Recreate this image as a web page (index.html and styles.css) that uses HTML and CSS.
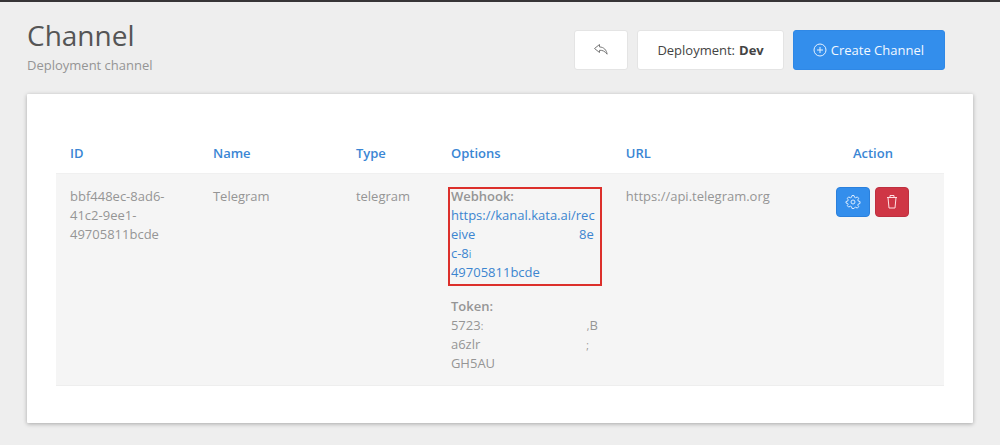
FILE: index.html
```html
<!DOCTYPE html>
<html lang="en">
<head>
<meta charset="utf-8">
<title>Channel</title>
<link rel="stylesheet" href="styles.css">
</head>
<body>
<main class="page">
  <header class="page-header">
    <div class="heading">
      <h1 class="title">Channel</h1>
      <p class="subtitle">Deployment channel</p>
    </div>
    <div class="toolbar">
      <button class="btn btn-back" type="button" aria-label="Back">
        <svg width="16" height="14" viewBox="0 0 16 14" fill="none" stroke="#777" stroke-width="1" stroke-linejoin="round"><path d="M6.500 1.500 1.500 5.500l5 4V7.300c3.200-.2 5.400 1 7.600 3.900C13.500 7 11 4.200 6.500 3.900z"/></svg>
      </button>
      <button class="btn" type="button">Deployment: <strong>Dev</strong></button>
      <button class="btn btn-primary" type="button">
        <svg width="14" height="14" viewBox="0 0 14 14" fill="none" stroke="#e6f2ff" stroke-width="1"><circle cx="7" cy="7" r="6"/><path d="M7 4v6M4 7h6"/></svg>
        Create Channel
      </button>
    </div>
  </header>
  <section class="card">
    <table class="channels">
      <thead>
        <tr>
          <th class="col-id">ID</th>
          <th class="col-name">Name</th>
          <th class="col-type">Type</th>
          <th class="col-options">Options</th>
          <th class="col-url">URL</th>
          <th class="col-action">Action</th>
        </tr>
      </thead>
      <tbody>
        <tr>
          <td>bbf448ec-8ad6-41c2-9ee1-49705811bcde</td>
          <td>Telegram</td>
          <td>telegram</td>
          <td>
            <div class="webhook">
              <strong class="label">Webhook:</strong>
              <a class="link" href="#">
                <span class="line">https://kanal.kata.ai/rec</span>
                <span class="line split"><span>eive</span><span>8e</span></span>
                <span class="line">c-8<span class="cut">i</span></span>
                <span class="line">49705811bcde</span>
              </a>
            </div>
            <div class="token">
              <strong class="label">Token:</strong>
              <span class="line split"><span>5723<span class="cut">:</span></span><span><span class="cut">,</span>B</span></span>
              <span class="line split split-short"><span>a6zlr</span><span class="cut">;</span></span>
              <span class="line">GH5AU</span>
            </div>
          </td>
          <td>https://api.telegram.org</td>
          <td>
            <div class="actions">
              <button class="icon-btn" type="button" aria-label="Settings">
                <svg width="16" height="16" viewBox="0 0 16 16" fill="none" stroke="#d9ebff" stroke-width="1" stroke-linejoin="round"><path d="M7 1.500h2l.5 1.800 1.200.5 1.600-.9 1.400 1.400-.9 1.600.5 1.200 1.700.4v2l-1.700.5-.5 1.200.9 1.500-1.400 1.400-1.600-.9-1.200.5L9 14.500H7l-.5-1.800-1.200-.5-1.600.9-1.400-1.400.9-1.500L2.700 9.500 1 9V7.500l1.700-.4.5-1.200-.9-1.600 1.400-1.400 1.600.9 1.200-.5z"/><circle cx="8" cy="8" r="2"/></svg>
              </button>
              <button class="icon-btn icon-btn-danger" type="button" aria-label="Delete">
                <svg width="14" height="16" viewBox="0 0 14 16" fill="none" stroke="#ffdfe2" stroke-width="1" stroke-linejoin="round"><path d="M2 3.500h10M5 3.500v-2h4v2M3 3.500l1 10.500h6l1-10.500"/></svg>
              </button>
            </div>
          </td>
        </tr>
      </tbody>
    </table>
  </section>
</main>
</body>
</html>
```
FILE: styles.css
```css
* {
  box-sizing: border-box;
}

body {
  margin: 0;
  background: #eee;
  border-top: 2px solid #363436;
  color: #959595;
  font: 13px/19px "Open Sans", "Noto Sans", sans-serif;
}

.page {
  padding: 14px 27px 21px;
}

.page-header {
  display: flex;
  justify-content: space-between;
  align-items: flex-start;
  padding-right: 28px;
}

.title {
  margin: 0;
  color: #555;
  font-size: 28px;
  font-weight: 400;
  line-height: 38px;
}

.subtitle {
  margin: 0;
  line-height: 22px;
}

.toolbar {
  display: flex;
  gap: 9px;
  padding-top: 14px;
}

.btn {
  display: flex;
  align-items: center;
  justify-content: center;
  gap: 4px;
  height: 40px;
  padding: 0 19px;
  border: 1px solid #e4e4e4;
  border-radius: 3px;
  background: #fff;
  color: #444;
  font: inherit;
}

.btn-primary {
  padding: 0 20px 0 19px;
  border-color: #2f88e6;
  background: #338eec;
  color: #f2f8ff;
}

.btn-back {
  padding: 0 18px;
}

.card {
  margin-top: 18px;
  padding: 40px 29px 37px;
  border-radius: 1px;
  background: #fff;
  box-shadow: 0 1px 4px rgba(0, 0, 0, 0.3);
}

.channels {
  width: 100%;
  border-collapse: collapse;
  table-layout: fixed;
}

.channels th {
  padding: 10px 14px;
  color: #3a86d4;
  font-weight: 600;
  text-align: left;
}

.channels td {
  padding: 13px 14px 12px;
  border-top: 1px solid #f0f0f0;
  border-bottom: 1px solid #eee;
  background: #f5f5f5;
  vertical-align: top;
}

.col-id,
.col-name {
  width: 16.1%;
}

.col-type {
  width: 10.7%;
}

.col-options {
  width: 19.7%;
}

.col-url {
  width: 21.4%;
}

.channels .col-action {
  text-align: center;
}

.label,
.line {
  display: block;
}

.label {
  font-weight: 600;
}

.link {
  color: #3c85d0;
  text-decoration: none;
}

.split {
  display: flex;
  justify-content: space-between;
  align-items: baseline;
}

.split-short {
  padding-right: 9px;
}

.link .split {
  padding-right: 4px;
}

.cut {
  font-size: 10px;
  line-height: 10px;
}

.webhook {
  position: relative;
}

.webhook::after {
  content: "";
  position: absolute;
  inset: 0 -4px -4px -3px;
  border: 2px solid #dc2f2b;
  pointer-events: none;
}

.token {
  margin-top: 15px;
}

.actions {
  display: flex;
  justify-content: center;
  gap: 5px;
}

.icon-btn {
  display: flex;
  align-items: center;
  justify-content: center;
  width: 34px;
  height: 30px;
  padding: 0;
  border: 1px solid #2b80dc;
  border-radius: 4px;
  background: #338eec;
}

.icon-btn-danger {
  border-color: #bd3040;
  background: #cf3645;
}
```
